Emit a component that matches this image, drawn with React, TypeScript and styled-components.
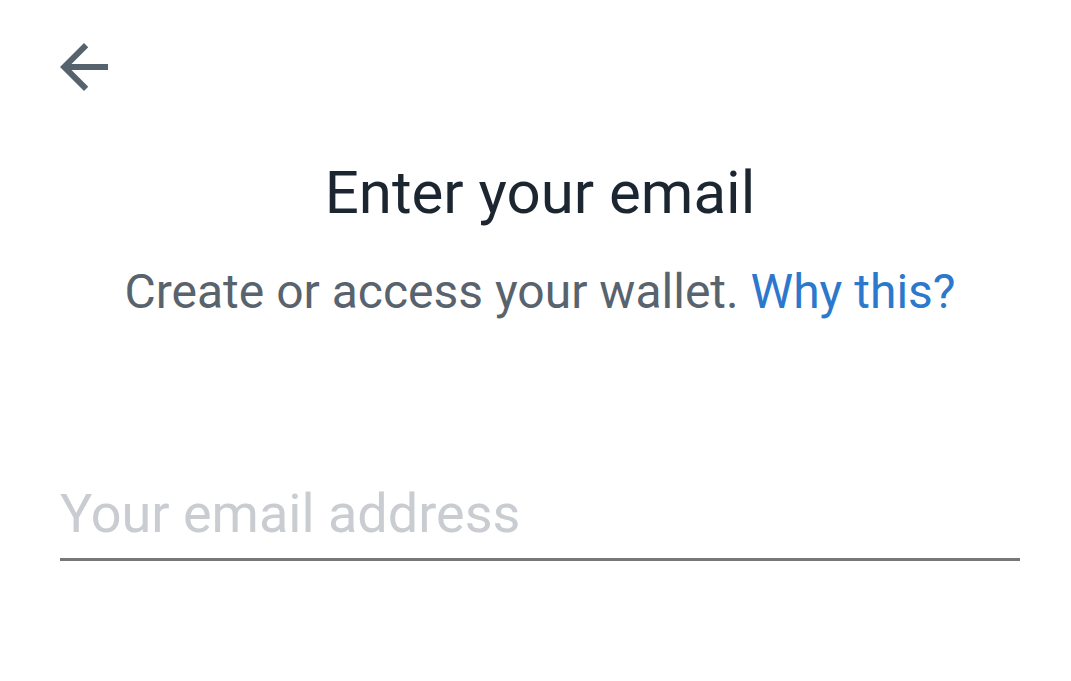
import styled, { createGlobalStyle } from "styled-components";

const GlobalStyle = createGlobalStyle`
  html, body {
    margin: 0;
    padding: 0;
    background: #ffffff;
  }
  body {
    font-family: Roboto, "Liberation Sans", sans-serif;
  }
`;

const Screen = styled.div`
  width: 1071px;
  height: 681px;
  box-sizing: border-box;
  padding: 31px 51px 0 60px;
  display: flex;
  flex-direction: column;
  background: #ffffff;
  overflow: hidden;
`;

const BackButton = styled.button`
  width: 72px;
  height: 72px;
  margin-left: -12px;
  padding: 0;
  border: none;
  background: none;
  color: #56626c;
  cursor: pointer;
  display: flex;
  align-items: center;
  justify-content: center;

  svg {
    width: 72px;
    height: 72px;
    fill: currentColor;
  }
`;

const Title = styled.h1`
  margin: 54px 0 0;
  text-align: center;
  font-size: 60px;
  font-weight: 400;
  line-height: 72px;
  color: #1b2631;
`;

const Subtitle = styled.p`
  margin: 35px 0 0;
  text-align: center;
  font-size: 48px;
  line-height: 56px;
  color: #58636d;
`;

const Link = styled.a`
  color: #2b78cc;
  text-decoration: none;
`;

const EmailInput = styled.input`
  margin-top: 164px;
  width: 100%;
  box-sizing: border-box;
  padding: 0 0 14px;
  border: none;
  border-bottom: 3px solid #777777;
  outline: none;
  background: transparent;
  font-family: Roboto, "Liberation Sans", sans-serif;
  font-size: 54px;
  line-height: 60px;
  color: #1b2631;

  &::placeholder {
    color: #c9ccd1;
  }
`;

export default function App() {
  return (
    <>
      <GlobalStyle />
      <Screen>
        <BackButton aria-label="Back">
          <svg viewBox="0 0 24 24">
            <path d="M20 11H7.83l5.59-5.59L12 4l-8 8 8 8 1.41-1.41L7.83 13H20v-2z" />
          </svg>
        </BackButton>
        <Title>Enter your email</Title>
        <Subtitle>
          Create or access your wallet. <Link href="#">Why this?</Link>
        </Subtitle>
        <EmailInput type="email" placeholder="Your email address" />
      </Screen>
    </>
  );
}
